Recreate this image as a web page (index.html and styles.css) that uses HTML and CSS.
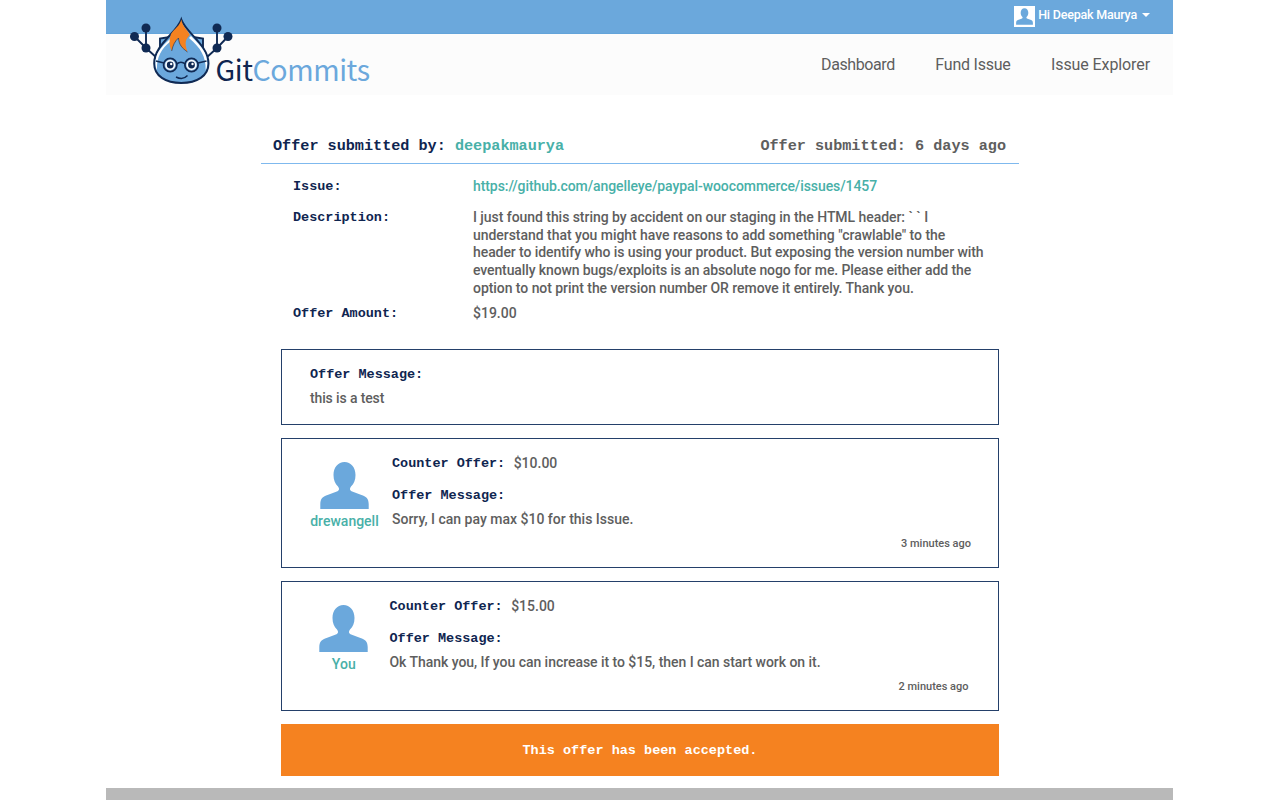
FILE: index.html
```
<!DOCTYPE html>
<html lang="en">
<head>
<meta charset="utf-8">
<title>GitCommits</title>
<link rel="stylesheet" href="styles.css">
</head>
<body>
<svg class="defs" width="0" height="0" aria-hidden="true">
  <symbol id="person" viewBox="0 0 49 47">
    <path d="M24.500 0C31 0 35.500 5.500 35.500 13C35.500 18 34 21.500 31 24.500C29.500 26.500 29.500 28 31.500 29.200L43.500 33.800C47.500 35.500 48.500 38 48.700 42V47H.300V42C.500 38 1.500 35.500 5.500 33.800L17.500 29.200C19.500 28 19.500 26.500 18 24.500C15 21.500 13.500 18 13.500 13C13.500 5.500 18 0 24.500 0Z"/>
  </symbol>
</svg>
<div class="page">
  <header class="header">
    <div class="topbar">
      <span class="user-avatar"><svg class="person"><use href="#person"/></svg></span>
      <span class="user-name">Hi Deepak Maurya</span>
      <span class="caret"></span>
    </div>
    <div class="navbar">
      <a class="logo">
        <svg class="mascot" viewBox="0 0 104 68">
          <g stroke="#102a54" stroke-width="1.900" fill="none">
            <path d="M5.500 20.500L17 32L28 42M17 32V12M99 20.500L88 32L77 42M88 32V12"/>
            <path d="M31 36V22.500L44 20.500M74 36V22.500L61 20.500" fill="#6ba8dc"/>
          </g>
          <g fill="#102a54"><circle cx="5.500" cy="20.500" r="4.500"/><circle cx="17" cy="12" r="4.500"/><circle cx="17" cy="32" r="4.500"/><circle cx="99" cy="20.500" r="4.500"/><circle cx="88" cy="12" r="4.500"/><circle cx="88" cy="32" r="4.500"/></g>
          <path d="M52.300 3.500C57 17 79.500 29 79.500 47.500C79.500 60 68 67 52.300 67S25.200 60 25.200 47.500C25.200 29 47.500 17 52.300 3.500Z" fill="#6ba8dc" stroke="#102a54" stroke-width="2"/>
          <path d="M41 23C31 32 26.500 38 26.500 47C26.500 50 27 52 28 54C27.500 41 32 33 42 25ZM62 20C73 31 78 37 78.200 47C78.200 50 77.700 52 76.700 54C77 41 72 32 60 22Z" fill="#fff"/>
          <path d="M52.300 3.500C53.500 11 59 14 60.800 19C57 23 55 26 58.500 36C53 32 50 29 49.500 22C46 25 44 29 42.700 35C40 29 40 24 42 18C45 13 51 10 52.300 3.500Z" fill="#f58220"/>
          <path d="M58.500 36C53 32 50 29 49.500 22C46 25 44 29 42.700 35" fill="none" stroke="#102a54" stroke-width=".600"/>
          <g stroke="#102a54" stroke-width="1.800" fill="#9ac4e8"><circle cx="41.200" cy="49" r="6.600"/><circle cx="62.500" cy="49" r="6.600"/></g>
          <path d="M47.600 48Q52 44.500 56.300 48M35 47L27 45M69 47L77.500 45" stroke="#102a54" stroke-width="1.600" fill="none"/>
          <circle cx="41.200" cy="49" r="4.900" fill="#fff"/><circle cx="62.500" cy="49" r="4.900" fill="#fff"/>
          <circle cx="41.200" cy="49" r="3.400" fill="#102a54"/><circle cx="62.500" cy="49" r="3.400" fill="#102a54"/>
          <circle cx="42.200" cy="48" r="1.200" fill="#fff"/><circle cx="63.500" cy="48" r="1.200" fill="#fff"/>
          <path d="M47 61Q54 64.500 58.500 59.500" stroke="#102a54" stroke-width="1.400" fill="none"/>
        </svg>
        <span class="wordmark"><span class="navy">Git</span><span>Commits</span></span>
      </a>
      <nav class="nav"><a class="n1">Dashboard</a><a class="n2">Fund Issue</a><a class="n3">Issue Explorer</a></nav>
    </div>
  </header>
  <main class="offer">
    <div class="offer-head mono">
      <span class="navy">Offer submitted by: <a class="link">deepakmaurya</a></span>
      <span>Offer submitted: 6 days ago</span>
    </div>
    <dl class="details">
      <dt class="label">Issue:</dt><dd><a class="link url">https://github.com/angelleye/paypal-woocommerce/issues/1457</a></dd>
      <dt class="label">Description:</dt>
      <dd class="desc"><span class="t1">I just found this string by accident on our staging in the HTML header: ` ` I</span><br><span class="t2">understand that you might have reasons to add something "crawlable" to the</span><br><span class="t3">header to identify who is using your product. But exposing the version number with</span><br><span class="t4">eventually known bugs/exploits is an absolute nogo for me. Please either add the</span><br><span class="t5">option to not print the version number OR remove it entirely. Thank you.</span></dd>
      <dt class="label">Offer Amount:</dt><dd>$19.00</dd>
    </dl>
    <section class="card first">
      <div class="label">Offer Message:</div>
      <p>this is a test</p>
    </section>
    <section class="card counter">
      <div class="author"><svg class="person"><use href="#person"/></svg><a class="link">drewangell</a></div>
      <div class="body">
        <div class="amount"><span class="label">Counter Offer:</span><span>$10.00</span></div>
        <div class="label">Offer Message:</div>
        <p>Sorry, I can pay max $10 for this Issue.</p>
        <time>3 minutes ago</time>
      </div>
    </section>
    <section class="card counter you">
      <div class="author"><svg class="person"><use href="#person"/></svg><a class="link">You</a></div>
      <div class="body">
        <div class="amount"><span class="label">Counter Offer:</span><span>$15.00</span></div>
        <div class="label">Offer Message:</div>
        <p>Ok Thank you, If you can increase it to $15, then I can start work on it.</p>
        <time>2 minutes ago</time>
      </div>
    </section>
    <div class="banner mono">This offer has been accepted.</div>
  </main>
  <footer class="footer"></footer>
</div>
</body>
</html>
```
FILE: styles.css
```
* { box-sizing: border-box; }
body { margin: 0; height: 800px; overflow: hidden; background: #fff; color: #5e5e5e; font: 500 14px/17.75px Roboto, "Liberation Sans", sans-serif; }
.defs { display: block; }
.page { width: 1067px; margin-left: 106px; height: 800px; display: flex; flex-direction: column; }
.header { height: 95px; }
.topbar { height: 34px; background: #6ba8dc; display: flex; justify-content: flex-end; align-items: flex-start; padding: 6px 23px 0 0; color: #fff; font-size: 12.5px; border-bottom: 1px solid #63a4da; }
.user-avatar { width: 21px; height: 21px; background: #fff; padding: 2px; display: flex; }
.person { width: 49px; height: 47px; fill: #6ba8dc; display: block; }
.user-avatar .person { width: 17px; height: 17px; }
.user-name { margin-left: 3px; letter-spacing: -.2px; }
.caret { margin: 7px 0 0 5px; border: 4px solid transparent; border-top-color: #fff; border-bottom: 0; }
.navbar { height: 61px; background: #fcfcfc; display: flex; justify-content: space-between; padding: 0 23px; }
.logo { display: flex; margin-top: -18px; height: 68px; }
.mascot { width: 104px; height: 68px; }
.wordmark { margin: 33px 0 0 -17.5px; font: 400 28.5px/40px "Noto Sans CJK SC", sans-serif; letter-spacing: -.4px; color: #6ba8dc; white-space: nowrap; }
.navy, .label { color: #0f2550; }
.nav { display: flex; gap: 40.5px; padding-top: 22px; font-weight: 400; font-size: 16px; white-space: nowrap; }
.n1 { letter-spacing: -.4px; }
.n2 { letter-spacing: -.23px; }
.n3 { letter-spacing: -.1px; }
.mono, .label { font-family: "Liberation Mono", monospace; font-weight: 700; white-space: nowrap; }
.link { color: #48b0a8; }
.offer { width: 758px; margin-left: 155px; }
.offer-head { height: 69px; padding: 41px 13px 0 12px; border-bottom: 1px solid #7fb9ee; display: flex; justify-content: space-between; font-size: 15.17px; line-height: 20px; }
.label { font-size: 13.47px; }
.details { margin: 14px 0 0 32px; display: grid; grid-template-columns: 180px 1fr; row-gap: 13px; }
.details dd { margin: 0; white-space: nowrap; }
.details .desc { margin-bottom: -6px; }
.url { letter-spacing: -.08px; }
.t1 { letter-spacing: -.05px; }
.t2 { letter-spacing: -.042px; }
.t3 { letter-spacing: -.076px; }
.t4 { letter-spacing: -.11px; }
.t5 { letter-spacing: -.055px; }
.card { margin: 0 20px 13px; width: 718px; border: 1px solid #24406a; }
.card p { margin: 6px 0 0; }
.first { margin-top: 27px; height: 76px; padding: 16px 28px; }
.first p { letter-spacing: -.13px; }
.counter { height: 130px; display: flex; padding: 16px 27px 0 28px; }
.author { display: flex; flex-direction: column; align-items: center; padding-top: 7px; width: 69px; }
.author .link { margin-top: 4px; }
.body { flex: 1; margin-left: 13px; display: flex; flex-direction: column; }
.you { padding-right: 29.5px; }
.you .author { width: 67.5px; }
.you .body { margin-left: 12px; }
.you p { letter-spacing: -.04px; }
.amount { display: flex; gap: 8.5px; margin-bottom: 14px; }
time { align-self: flex-end; margin-top: 6px; font-size: 11px; }
.banner { height: 52px; margin: 0 20px; width: 718px; background: #f58220; color: #fff; text-align: center; font-size: 13.5px; line-height: 53px; }
.footer { margin-top: auto; height: 12px; background: #b9b9b9; }
```
